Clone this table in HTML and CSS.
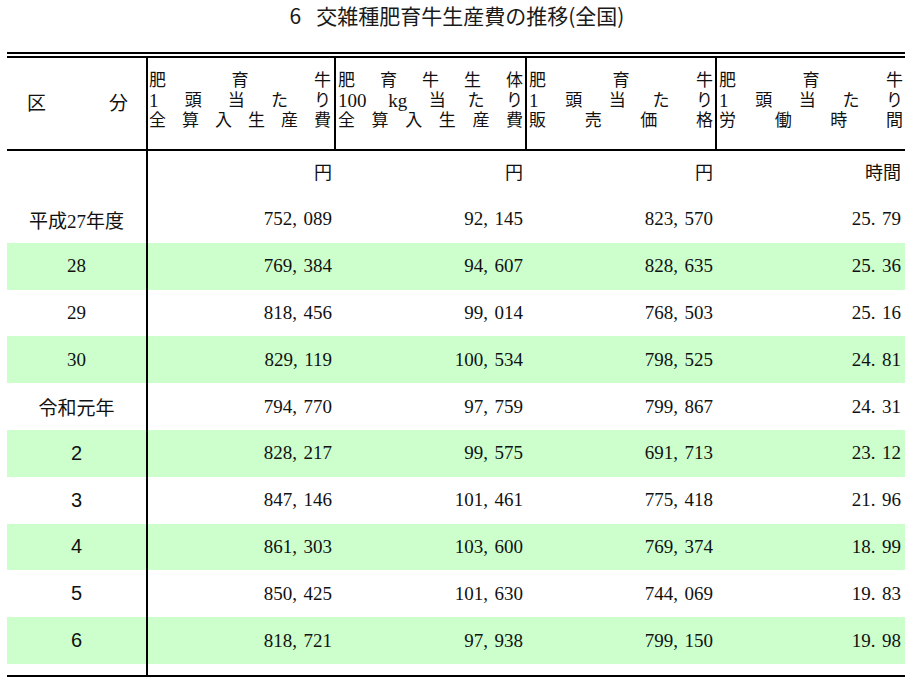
FILE: index.html
```html
<!DOCTYPE html>
<html lang="ja">
<head>
<meta charset="utf-8">
<title>交雑種肥育牛生産費の推移(全国)</title>
<link rel="stylesheet" href="styles.css">
</head>
<body>
<div class="title"><span class="num">6</span>交雑種肥育牛生産費の推移(全国)</div>
<div class="sheet">
  <div class="row head">
    <div class="cell lab"><span>区</span><span>分</span></div>
    <div class="cell hd">
      <div class="ln"><span>肥</span><span>育</span><span>牛</span></div>
      <div class="ln"><span class="d">1</span><span>頭</span><span>当</span><span>た</span><span>り</span></div>
      <div class="ln"><span>全</span><span>算</span><span>入</span><span>生</span><span>産</span><span>費</span></div>
    </div>
    <div class="cell hd">
      <div class="ln"><span>肥</span><span>育</span><span>牛</span><span>生</span><span>体</span></div>
      <div class="ln"><span class="d">100</span><span class="d">kg</span><span>当</span><span>た</span><span>り</span></div>
      <div class="ln"><span>全</span><span>算</span><span>入</span><span>生</span><span>産</span><span>費</span></div>
    </div>
    <div class="cell hd">
      <div class="ln"><span>肥</span><span>育</span><span>牛</span></div>
      <div class="ln"><span class="d">1</span><span>頭</span><span>当</span><span>た</span><span>り</span></div>
      <div class="ln"><span>販</span><span>売</span><span>価</span><span>格</span></div>
    </div>
    <div class="cell hd last">
      <div class="ln"><span>肥</span><span>育</span><span>牛</span></div>
      <div class="ln"><span class="d">1</span><span>頭</span><span>当</span><span>た</span><span>り</span></div>
      <div class="ln"><span>労</span><span>働</span><span>時</span><span>間</span></div>
    </div>
  </div>

  <div class="row units">
    <div class="cell lab"></div>
    <div class="cell u">円</div>
    <div class="cell u">円</div>
    <div class="cell u">円</div>
    <div class="cell u">時間</div>
  </div>

  <div class="row data">
    <div class="cell lab serif">平成27年度</div>
    <div class="cell v">752<span class="c">,</span>089</div>
    <div class="cell v">92<span class="c">,</span>145</div>
    <div class="cell v">823<span class="c">,</span>570</div>
    <div class="cell v">25<span class="c">.</span>79</div>
  </div>
  <div class="row data green">
    <div class="cell lab serif">28</div>
    <div class="cell v">769<span class="c">,</span>384</div>
    <div class="cell v">94<span class="c">,</span>607</div>
    <div class="cell v">828<span class="c">,</span>635</div>
    <div class="cell v">25<span class="c">.</span>36</div>
  </div>
  <div class="row data">
    <div class="cell lab serif">29</div>
    <div class="cell v">818<span class="c">,</span>456</div>
    <div class="cell v">99<span class="c">,</span>014</div>
    <div class="cell v">768<span class="c">,</span>503</div>
    <div class="cell v">25<span class="c">.</span>16</div>
  </div>
  <div class="row data green">
    <div class="cell lab serif">30</div>
    <div class="cell v">829<span class="c">,</span>119</div>
    <div class="cell v">100<span class="c">,</span>534</div>
    <div class="cell v">798<span class="c">,</span>525</div>
    <div class="cell v">24<span class="c">.</span>81</div>
  </div>
  <div class="row data">
    <div class="cell lab serif">令和元年</div>
    <div class="cell v">794<span class="c">,</span>770</div>
    <div class="cell v">97<span class="c">,</span>759</div>
    <div class="cell v">799<span class="c">,</span>867</div>
    <div class="cell v">24<span class="c">.</span>31</div>
  </div>
  <div class="row data green">
    <div class="cell lab sans">2</div>
    <div class="cell v">828<span class="c">,</span>217</div>
    <div class="cell v">99<span class="c">,</span>575</div>
    <div class="cell v">691<span class="c">,</span>713</div>
    <div class="cell v">23<span class="c">.</span>12</div>
  </div>
  <div class="row data">
    <div class="cell lab sans">3</div>
    <div class="cell v">847<span class="c">,</span>146</div>
    <div class="cell v">101<span class="c">,</span>461</div>
    <div class="cell v">775<span class="c">,</span>418</div>
    <div class="cell v">21<span class="c">.</span>96</div>
  </div>
  <div class="row data green">
    <div class="cell lab sans">4</div>
    <div class="cell v">861<span class="c">,</span>303</div>
    <div class="cell v">103<span class="c">,</span>600</div>
    <div class="cell v">769<span class="c">,</span>374</div>
    <div class="cell v">18<span class="c">.</span>99</div>
  </div>
  <div class="row data">
    <div class="cell lab sans">5</div>
    <div class="cell v">850<span class="c">,</span>425</div>
    <div class="cell v">101<span class="c">,</span>630</div>
    <div class="cell v">744<span class="c">,</span>069</div>
    <div class="cell v">19<span class="c">.</span>83</div>
  </div>
  <div class="row data green">
    <div class="cell lab sans">6</div>
    <div class="cell v">818<span class="c">,</span>721</div>
    <div class="cell v">97<span class="c">,</span>938</div>
    <div class="cell v">799<span class="c">,</span>150</div>
    <div class="cell v">19<span class="c">.</span>98</div>
  </div>
  <div class="row tail">
    <div class="cell lab"></div>
  </div>
</div>
</body>
</html>
```

FILE: styles.css
```css
* { box-sizing: border-box; }
html, body { margin: 0; padding: 0; background: #fff; }
body {
  width: 910px;
  height: 684px;
  color: #111;
  font-family: "Liberation Serif", "Noto Sans CJK JP", serif;
}

.title {
  height: 32px;
  line-height: 30px;
  margin-bottom: 20px;
  text-align: center;
  font-family: "Noto Sans CJK JP", "Liberation Sans", sans-serif;
  font-size: 21px;
  color: #1a1a1a;
  padding-left: 4px;
}
.title .num { margin-right: 15px; }

.sheet {
  margin-left: 7px;
  width: 898px;
  border-top: 6px double #000;
  border-bottom: 2px solid #000;
}

.row {
  display: grid;
  grid-template-columns: 141px 188px 191px 190px 188px;
}

.cell.lab { border-right: 2px solid #000; }

.head {
  height: 93px;
  border-bottom: 2px solid #000;
}
.head .cell { border-right: 2px solid #000; }
.head .cell.last { border-right: 0; }

.head .lab {
  display: flex;
  justify-content: space-between;
  align-items: center;
  padding: 0 18px 4px 20px;
  font-family: "Noto Sans CJK JP", sans-serif;
  font-size: 19px;
}

.hd {
  display: flex;
  flex-direction: column;
  justify-content: center;
  padding: 0 3px 6px 1px;
  font-size: 17px;
  line-height: 20px;
}
.head .hd + .hd { padding-left: 2px; padding-right: 2px; }
.ln {
  display: flex;
  justify-content: space-between;
}
.ln .d { font-size: 19px; }

.units { height: 45px; }
.u {
  display: flex;
  justify-content: flex-end;
  align-items: center;
  padding: 0 4px 6px 0;
  font-family: "Noto Sans CJK JP", sans-serif;
  font-size: 18px;
}

.data { height: 46.8px; }
.green { background: #ccffcc; }

.data .cell {
  display: flex;
  align-items: center;
  font-size: 19px;
}
.data .lab {
  justify-content: center;
}
.data .lab.sans {
  font-family: "Liberation Sans", "Noto Sans CJK JP", sans-serif;
  font-size: 20px;
}
.data .v {
  justify-content: flex-end;
  padding-right: 4px;
}
.data .v .c { margin-right: 6.5px; }

.tail { height: 11px; }
```
